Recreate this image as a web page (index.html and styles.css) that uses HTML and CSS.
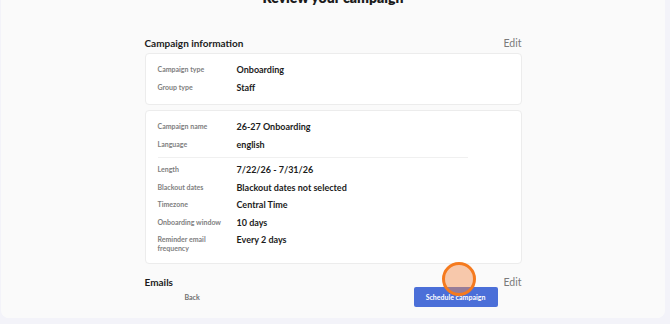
FILE: index.html
```html
<!DOCTYPE html>
<html lang="en">
<head>
  <meta charset="UTF-8">
  <meta name="viewport" content="width=device-width, initial-scale=1.0">
  <title>Review your campaign</title>
  <link rel="stylesheet" href="styles.css">
</head>
<body>
  <div class="panel">
    <div class="main">
      <h1 class="title">Review your campaign</h1>

      <section class="section">
        <div class="section-head">
          <h2>Campaign information</h2>
          <a class="edit" href="#">Edit</a>
        </div>
        <div class="card">
          <div class="row"><span class="label">Campaign type</span><span class="value">Onboarding</span></div>
          <div class="row"><span class="label">Group type</span><span class="value">Staff</span></div>
        </div>
        <div class="card">
          <div class="row"><span class="label">Campaign name</span><span class="value">26-27 Onboarding</span></div>
          <div class="row"><span class="label">Language</span><span class="value">english</span></div>
          <hr class="divider">
          <div class="row"><span class="label">Length</span><span class="value">7/22/26 - 7/31/26</span></div>
          <div class="row"><span class="label">Blackout dates</span><span class="value">Blackout dates not selected</span></div>
          <div class="row"><span class="label">Timezone</span><span class="value">Central Time</span></div>
          <div class="row"><span class="label">Onboarding window</span><span class="value">10 days</span></div>
          <div class="row"><span class="label">Reminder email frequency</span><span class="value">Every 2 days</span></div>
        </div>
      </section>

      <section class="section emails">
        <div class="section-head">
          <h2>Emails</h2>
          <a class="edit" href="#">Edit</a>
        </div>
      </section>
    </div>

    <div class="footer">
      <div class="footer-inner">
        <button class="btn-back">Back</button>
        <button class="btn-primary">Schedule campaign</button>
      </div>
    </div>

    <div class="click-dot"></div>
  </div>
</body>
</html>
```

FILE: styles.css
```css
body {
  margin: 0;
  background: #f3f3f9;
  font-family: Lato, "Noto Sans", sans-serif;
  color: #1c1c1c;
}
.panel {
  position: relative;
  margin: 0 5px 0 1px;
  height: 318px;
  background: #fafafa;
  border-radius: 0 0 8px 8px;
  display: flex;
  flex-direction: column;
  overflow: hidden;
}
.main {
  flex: 1;
  overflow: hidden;
}
.title {
  margin: -12px 0 0;
  font-size: 14px;
  line-height: 20px;
  font-weight: 800;
  text-align: center;
}
.section {
  width: 377px;
  margin: 27px auto 0;
}
.section-head {
  display: flex;
  justify-content: space-between;
  align-items: center;
  height: 16px;
  margin-bottom: 2px;
}
.section-head h2 {
  margin: 0;
  font-size: 10px;
  font-weight: 700;
}
.edit {
  color: #7a7a7a;
  font-size: 10.5px;
  text-decoration: none;
}
.card {
  background: #fff;
  border: 1px solid #ececec;
  border-radius: 4px;
  padding: 7px 12px 8px;
  margin-bottom: 5px;
}
.row {
  display: flex;
  align-items: flex-start;
  padding: 2px 0;
}
.label {
  width: 68px;
  margin-right: 11px;
  flex-shrink: 0;
  font-size: 7px;
  line-height: 9px;
  font-weight: 700;
  color: #808080;
  padding-top: 2px;
}
.value {
  font-size: 9px;
  line-height: 13.5px;
  font-weight: 700;
}
.divider {
  border: none;
  border-top: 1px solid #f0f0f0;
  margin: 4px 41px 3px 0;
}
.emails {
  margin-top: 10px;
}
.footer {
  height: 32px;
  background: #fafafa;
}
.footer-inner {
  width: 377px;
  margin: 0 auto;
  padding: 1px 24px 0;
  box-sizing: border-box;
  display: flex;
  justify-content: space-between;
  align-items: flex-start;
}
.btn-back {
  background: none;
  border: none;
  padding: 0 16px;
  height: 20px;
  font-family: inherit;
  font-size: 7px;
  font-weight: 700;
  color: #6e6e6e;
}
.btn-primary {
  background: #4b6fd8;
  border: none;
  border-radius: 2px;
  width: 84px;
  height: 20px;
  padding: 0;
  font-family: inherit;
  font-size: 7px;
  font-weight: 700;
  color: #fff;
}
.click-dot {
  position: absolute;
  left: 441px;
  top: 262px;
  width: 28px;
  height: 28px;
  border: 3px solid #f57a1e;
  border-radius: 50%;
  background: rgba(245, 140, 75, 0.45);
}
```
